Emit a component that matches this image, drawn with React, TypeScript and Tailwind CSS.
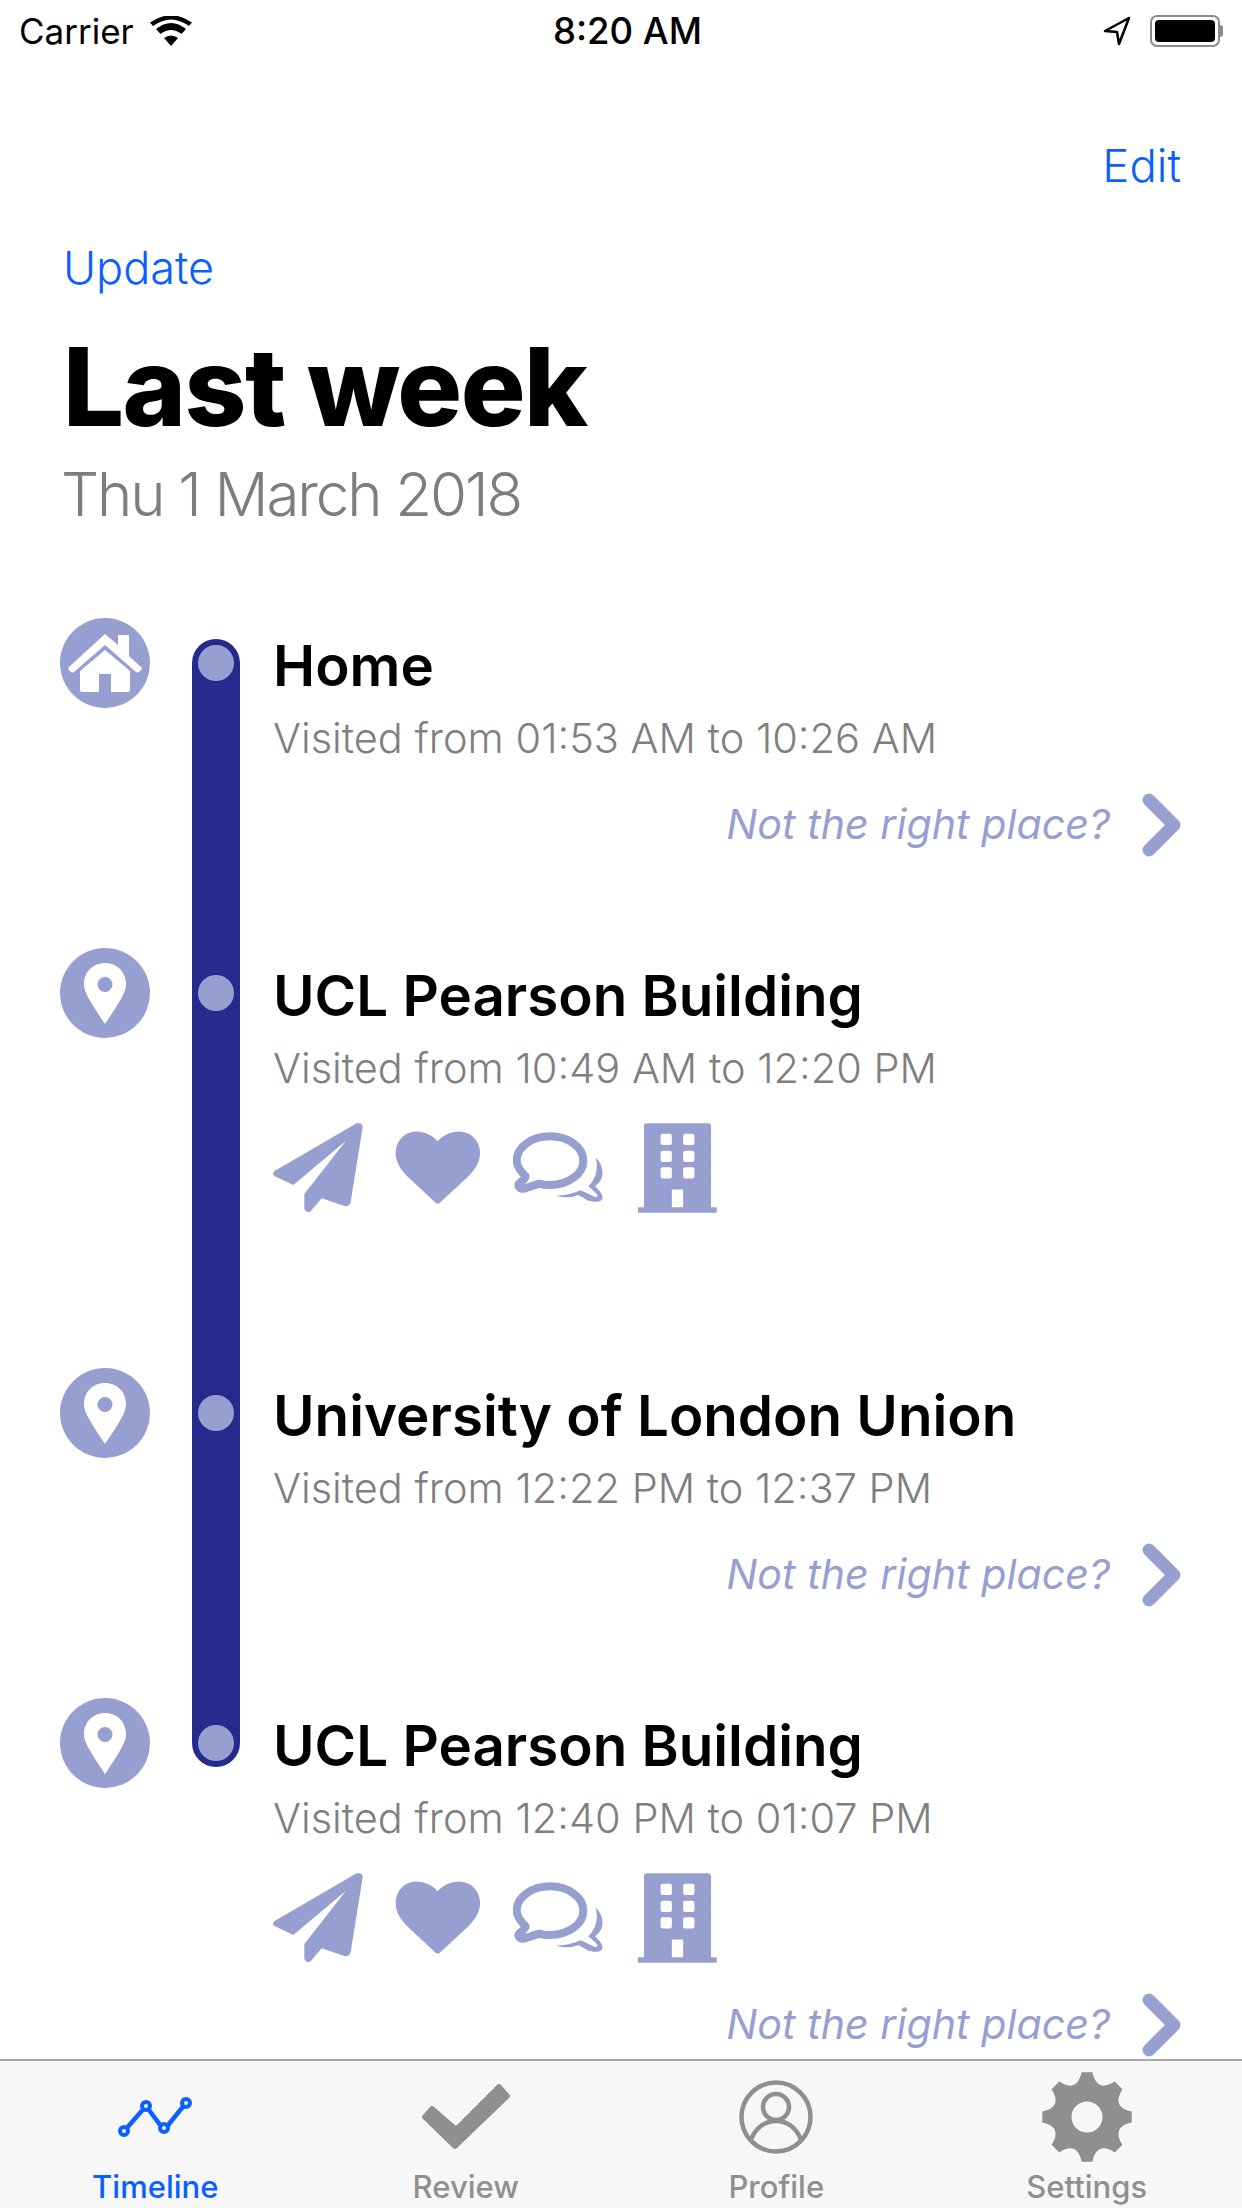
import React from "react";

const P = "#979fd1";

function Pin() {
  return (
    <svg width="42" height="61" viewBox="0 0 42 61">
      <path fillRule="evenodd" fill="#fff" d="M21 0C9 0 0 9 0 21c0 5 2 9.500 4.500 14C9 43 15 52 21 61c6-9 12-18 16.500-26C40 30.500 42 26 42 21 42 9 33 0 21 0Zm0 14a7.500 7.500 0 1 1 0 15 7.500 7.500 0 0 1 0-15Z" />
    </svg>
  );
}

function House() {
  return (
    <svg width="74" height="58" viewBox="0 0 74 58">
      <path fill="#fff" d="M37 0 50 11V1h11v21l12 11q1.500 1.500 0 3l-2 2q-1.500 1-3 0L37 11 6 38q-1.500 1-3 0l-2-2q-1.500-1.500 0-3Z" />
      <path fill="#fff" d="M37 16 62 37v19q0 2-2 2H43V40H31v18H14q-2 0-2-2V37Z" />
    </svg>
  );
}

function Circle({ children }: { children: React.ReactNode }) {
  return <div className="w-[90px] h-[90px] rounded-full bg-[#979fd1] flex items-center justify-center shrink-0">{children}</div>;
}

function Chevron() {
  return (
    <svg width="40" height="64" viewBox="0 0 40 64">
      <path d="M7 7 32 32 7 57" fill="none" stroke={P} strokeWidth="13" strokeLinecap="round" strokeLinejoin="round" />
    </svg>
  );
}

function Wrong() {
  return (
    <div className="flex items-center justify-end h-[64px] pr-[60px] gap-[32px]">
      <span className="text-[41.200px] italic text-[#979fd1] leading-none">Not the right place?</span>
      <Chevron />
    </div>
  );
}

function Activities() {
  return (
    <div className="flex gap-[32px] h-[95px] mt-[27px]">
      <svg width="90" height="95" viewBox="39 60 270 285">
        <path fill={P} d="M290 73 45 215q-12 10 0 17l55 26 158-133-125 160v45q7 15 19 7l33-39 70 24q13 1 17-12l36-225q0-15-18-12Z" />
      </svg>
      <svg width="86" height="95" viewBox="405 60 258 285">
        <path fill={P} d="M533 127C500 90 440 85 415 130c-20 40 0 75 25 100l85 80q8 8 16 0l86-80c25-25 45-60 25-100-25-45-86-40-119-3Z" />
      </svg>
      <svg width="90" height="95" viewBox="759 60 270 285">
        <path fill="none" stroke={P} strokeWidth="24" strokeLinejoin="round" d="M797 232C780 215 770 200 770 185c0-40 45-73 100-73s100 33 100 73-45 73-100 73c-12 0-22-1-32-4l-46 15c-15 2-22-10-12-18 7-5 15-10 17-19Z" />
        <path fill={P} d="M1007 175c28 30 28 65-2 87 25 23 25 35 20 40-10 10-25 5-40 3l-30-17c-22 10-45 8-67 2 25 0 50-6 74-16l43 20c10 0 10-6 0-14l-20-18c25-25 30-55 22-87Z" />
      </svg>
      <svg width="79" height="95" viewBox="1135 60 238 285" className="ml-[3px]">
        <path fill={P} fillRule="evenodd" d="M1162 72h184q9 0 9 9v244h17v17h-237v-17h18V81q0-9 9-9Zm47 32q-6 0-6 6v22q0 6 6 6h22q6 0 6-6v-22q0-6-6-6Zm68 0q-6 0-6 6v22q0 6 6 6h22q6 0 6-6v-22q0-6-6-6Zm-68 51q-6 0-6 6v22q0 6 6 6h22q6 0 6-6v-22q0-6-6-6Zm68 0q-6 0-6 6v22q0 6 6 6h22q6 0 6-6v-22q0-6-6-6Zm-68 50q-6 0-6 6v22q0 6 6 6h22q6 0 6-6v-22q0-6-6-6Zm68 0q-6 0-6 6v22q0 6 6 6h22q6 0 6-6v-22q0-6-6-6Zm-40 67v53h34v-53Z" />
      </svg>
    </div>
  );
}

function Row({ h, title, sub, icon, children }: { h: string; title: string; sub: string; icon: React.ReactNode; children?: React.ReactNode }) {
  return (
    <div className={`flex ${h}`}>
      <Circle>{icon}</Circle>
      <div className="w-[48px] ml-[42px] shrink-0 relative z-10 flex justify-center">
        <div className="w-[36px] h-[36px] rounded-full bg-[#979fd1] mt-[27px]" />
      </div>
      <div className="ml-[33px] flex-1 flex flex-col">
        <div className="text-[56.500px] leading-[64px] font-semibold text-black mt-[16px]">{title}</div>
        <div className="text-[41.500px] leading-[48px] text-[#7f7f7f] font-light mt-[16px]">{sub}</div>
        {children}
      </div>
    </div>
  );
}

function Tab({ label, active, icon }: { label: string; active?: boolean; icon: React.ReactNode }) {
  return (
    <div className="flex-1 flex flex-col items-center">
      <div className="h-[108px] pt-[3px] flex items-center justify-center">{icon}</div>
      <div className={`text-[31px] leading-[36px] font-medium ${active ? "text-[#0a60ff]" : "text-[#8f8f8f]"}`}>{label}</div>
    </div>
  );
}

function Gear() {
  const pt = (a: number, r: number) => `${(45 + r * Math.sin(a)).toFixed(2)} ${(45 - r * Math.cos(a)).toFixed(2)}`;
  let d = "";
  for (let i = 0; i < 8; i++) {
    const a = (i * Math.PI) / 4;
    d += `${i === 0 ? "M" : "L"}${pt(a - 0.12, 45)}L${pt(a + 0.12, 45)}Q${pt(a + Math.PI / 8, 26)} ${pt(a + Math.PI / 4 - 0.12, 45)}`;
  }
  d += "ZM45 29.500a15.500 15.500 0 1 0 0 31 15.500 15.500 0 0 0 0-31Z";
  return (
    <svg width="90" height="90" viewBox="0 0 90 90">
      <path fill="#8f8f8f" fillRule="evenodd" d={d} />
    </svg>
  );
}

export default function App() {
  return (
    <div className="w-[1242px] h-[2208px] bg-white flex flex-col overflow-hidden font-['Inter',sans-serif]">
      <div className="h-[62px] flex items-center justify-between px-[19px] shrink-0 relative">
        <div className="flex items-center gap-[16px]">
          <span className="text-[35px] leading-none text-black">Carrier</span>
          <svg width="42" height="30" viewBox="0 0 42 30">
            <path fill="#000" d="M21 30 14 22q7-5 14 0ZM10.500 18 6 13q15-12 30 0l-4.500 5q-10.500-8-21 0ZM3 10 0 6.500Q21-8 42 6.500L39 10Q21-3 3 10Z" />
          </svg>
        </div>
        <span className="absolute left-[553px] text-[36.500px] leading-none font-medium text-black">8:20 AM</span>
        <div className="flex items-center gap-[18px]">
          <svg width="30" height="30" viewBox="0 0 30 30">
            <path fill="none" stroke="#000" strokeWidth="2.500" strokeLinejoin="round" d="M27 2 3 15l12 1 2 12Z" />
          </svg>
          <div className="flex items-center">
            <div className="w-[70px] h-[32px] rounded-[7px] border-2 border-[#8a8a8a] p-[3px]">
              <div className="w-full h-full bg-black rounded-[4px]" />
            </div>
            <div className="w-[3px] h-[12px] bg-[#8a8a8a] rounded-r-full" />
          </div>
        </div>
      </div>

      <div className="flex-1 relative min-h-0">
        <div className="text-right pr-[61px] text-[45.500px] leading-[50px] text-[#0a60ff] font-light mt-[79px]">Edit</div>
        <div className="pl-[63px] text-[45px] leading-[50px] text-[#0a60ff] font-light mt-[52px]">Update</div>
        <div className="pl-[63px] text-[108px] leading-[110px] font-extrabold text-black tracking-[-1.500px] mt-[39px]">Last week</div>
        <div className="pl-[61px] text-[60px] leading-[72px] text-[#7d7d7d] font-light tracking-[-2.100px] mt-[16px]">Thu 1 March 2018</div>

        <div className="relative pl-[60px] mt-[88px]">
          <div className="absolute left-[192px] top-[21px] w-[48px] h-[1128px] rounded-full bg-[#252b8d]" />
          <Row h="h-[330px]" title="Home" sub="Visited from 01:53 AM to 10:26 AM" icon={<House />}>
            <div className="mt-[31px]"><Wrong /></div>
          </Row>
          <Row h="h-[420px]" title="UCL Pearson Building" sub="Visited from 10:49 AM to 12:20 PM" icon={<Pin />}>
            <Activities />
          </Row>
          <Row h="h-[330px]" title="University of London Union" sub="Visited from 12:22 PM to 12:37 PM" icon={<Pin />}>
            <div className="mt-[31px]"><Wrong /></div>
          </Row>
          <Row h="h-[370px]" title="UCL Pearson Building" sub="Visited from 12:40 PM to 01:07 PM" icon={<Pin />}>
            <Activities />
            <div className="mt-[29px]"><Wrong /></div>
          </Row>
        </div>
      </div>

      <div className="h-[149px] shrink-0 bg-[#f7f7f7] border-t-[2px] border-[#a9a9a9] flex relative z-10">
        <Tab label="Timeline" active icon={
          <svg width="74" height="40" viewBox="0 0 74 40">
            <path fill="none" stroke="#0a60ff" strokeWidth="4.500" d="M7 33 28 9l18 24L68 6" />
            <g fill="#f7f7f7" stroke="#0a60ff" strokeWidth="4">
              <circle cx="6" cy="34" r="4" /><circle cx="28" cy="9" r="4" /><circle cx="46" cy="31" r="4" /><circle cx="68" cy="6" r="4" />
            </g>
          </svg>} />
        <Tab label="Review" icon={
          <svg width="88" height="66" viewBox="0 0 88 66">
            <path fill="#8f8f8f" d="M1 31 8 23q2-2 4 0l22 19L75 1q2-2 4 0l8 9q2 2 0 4L35 64q-2 2-4 0L1 35q-2-2 0-4Z" />
          </svg>} />
        <Tab label="Profile" icon={
          <svg width="74" height="74" viewBox="0 0 74 74">
            <g fill="none" stroke="#8f8f8f" strokeWidth="4.500">
              <circle cx="37" cy="37" r="34.500" />
              <circle cx="37" cy="27" r="13" />
              <path d="M12 60c4-12 14-19 25-19s21 7 25 19" />
            </g>
          </svg>} />
        <Tab label="Settings" icon={<Gear />} />
      </div>
    </div>
  );
}
